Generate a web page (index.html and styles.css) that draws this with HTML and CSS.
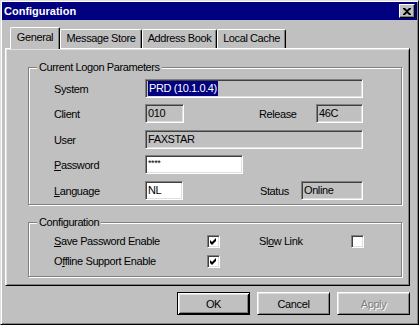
FILE: index.html
```html
<!DOCTYPE html>
<html lang="en">

<head>
    <meta charset="UTF-8">
    <title>Configuration</title>
    <link rel="stylesheet" href="styles.css">
</head>

<body>
    <div class="window">
        <div class="title-bar">
            <span class="title">Configuration</span>
            <button class="close-btn" aria-label="Close">
                <svg width="8" height="7" viewBox="0 0 8 7">
                    <path d="M0 0h2l2 2 2-2h2v1L5 3.5 8 6v1H6L4 5 2 7H0V6l3-2.5L0 1z" fill="#000" />
                </svg>
            </button>
        </div>

        <div class="content">
            <div class="tabs">
                <div class="tab tab-active tab-general">General</div>
                <div class="tab tab-store">Message Store</div>
                <div class="tab tab-address">Address Book</div>
                <div class="tab tab-cache">Local Cache</div>
            </div>

            <div class="panel">
                <fieldset class="group group-logon">
                    <legend>Current Logon Parameters</legend>
                    <div class="rows">
                        <div class="row">
                            <span class="label">System</span>
                            <div class="field field-wide"><span class="selected">PRD (10.1.0.4)</span></div>
                        </div>
                        <div class="row row-b">
                            <span class="label">Client</span>
                            <div class="field field-client">010</div>
                            <span class="label label-release">Release</span>
                            <div class="field field-release">46C</div>
                        </div>
                        <div class="row row-c">
                            <span class="label">User</span>
                            <div class="field field-wide">FAXSTAR</div>
                        </div>
                        <div class="row row-b">
                            <span class="label"><u>P</u>assword</span>
                            <div class="field field-edit field-password"><span class="stars">****</span></div>
                        </div>
                        <div class="row row-c">
                            <span class="label"><u>L</u>anguage</span>
                            <div class="field field-edit field-lang">NL</div>
                            <span class="label label-status">Status</span>
                            <div class="field field-status">Online</div>
                        </div>
                    </div>
                </fieldset>

                <fieldset class="group group-config">
                    <legend>Configuration</legend>
                    <div class="rows">
                        <div class="check-row">
                            <span class="check-label"><u>S</u>ave Password Enable</span>
                            <span class="checkbox">
                                <svg width="7" height="7" viewBox="0 0 7 7">
                                    <path d="M0 2l2 2 4-4v3L2 7 0 5z" fill="#000" />
                                </svg>
                            </span>
                            <span class="check-label label-slow">Sl<u>o</u>w Link</span>
                            <span class="checkbox"></span>
                        </div>
                        <div class="check-row check-row-2">
                            <span class="check-label">O<u>f</u>fline Support Enable</span>
                            <span class="checkbox">
                                <svg width="7" height="7" viewBox="0 0 7 7">
                                    <path d="M0 2l2 2 4-4v3L2 7 0 5z" fill="#000" />
                                </svg>
                            </span>
                        </div>
                    </div>
                </fieldset>
            </div>

            <div class="buttons">
                <button class="btn btn-default">OK</button>
                <button class="btn">Cancel</button>
                <button class="btn btn-disabled">Apply</button>
            </div>
        </div>
    </div>
</body>

</html>
```

FILE: styles.css
```css
* {
    box-sizing: border-box;
}

body {
    margin: 0;
    background: #c0c0c0;
    font-family: "Liberation Sans", Arial, sans-serif;
    font-size: 11px;
    letter-spacing: -0.4px;
    color: #000;
}

.window {
    width: 419px;
    height: 325px;
    padding: 1px;
    border: 1px solid;
    border-color: #dfdfdf #000 #000 #dfdfdf;
    box-shadow: inset 1px 1px #fff, inset -1px -1px #808080;
    background: #c0c0c0;
}

.title-bar {
    height: 18px;
    background: #000080;
    color: #fff;
    display: flex;
    align-items: center;
    justify-content: space-between;
    padding: 0 2px 0 2px;
}

.title {
    font-weight: bold;
    letter-spacing: 0;
}

.close-btn {
    width: 16px;
    height: 14px;
    padding: 0;
    margin: 0;
    background: #c0c0c0;
    border: 1px solid;
    border-color: #fff #000 #000 #fff;
    box-shadow: inset -1px -1px #808080;
    display: flex;
    align-items: center;
    justify-content: center;
}

/* dialog body */
.content {
    padding: 7px 0 0 3px;
}

.tabs {
    display: flex;
    align-items: flex-end;
    height: 21px;
    margin-left: 5px;
    position: relative;
    z-index: 1;
}

.tab {
    height: 19px;
    line-height: 17px;
    text-align: center;
    border: 1px solid;
    border-bottom: none;
    border-color: #fff #000 #fff #fff;
    border-radius: 2px 2px 0 0;
    box-shadow: inset -1px 0 #808080;
    background: #c0c0c0;
}

.tab-active {
    height: 22px;
    margin-bottom: -1px;
    line-height: 18px;
    position: relative;
    z-index: 2;
}

.tab-general {
    width: 50px;
}

.tab-store {
    width: 82px;
}

.tab-address {
    width: 75px;
}

.tab-cache {
    width: 69px;
}

.panel {
    width: 405px;
    height: 238px;
    padding: 11px 7px 0 22px;
    border: 1px solid;
    border-color: #fff #000 #000 #fff;
    box-shadow: inset 1px 1px #dfdfdf, inset -1px -1px #808080;
}

.group {
    margin: 0;
    padding: 5px 0 4px 8px;
    border: 1px solid #808080;
    box-shadow: 1px 1px #fff, inset 1px 1px #fff;
}

.group legend {
    padding: 0 2px;
    line-height: 14px;
    background: #c0c0c0;
}

.group-config {
    margin-top: 10px;
    padding: 6px 0 8px 8px;
}

.rows {
    margin-left: 17px;
}

.row {
    display: flex;
    align-items: center;
    height: 19px;
}

.row-b {
    margin-top: 6px;
}

.row-c {
    margin-top: 7px;
}

.label {
    width: 91px;
}

.label-release {
    width: 57px;
    margin-left: 75px;
}

.label-status {
    width: 41px;
    margin-left: 77px;
}

.field {
    height: 19px;
    line-height: 17px;
    padding-left: 2px;
    border: 1px solid;
    border-color: #808080 #fff #fff #808080;
    box-shadow: inset 1px 1px #404040, inset -1px -1px #dfdfdf;
    white-space: nowrap;
    overflow: hidden;
}

.field-wide {
    width: 218px;
}

.field-client {
    width: 39px;
}

.field-release {
    width: 47px;
}

.field-password {
    width: 98px;
}

.field-lang {
    width: 38px;
}

.field-status {
    width: 62px;
}

.field-edit {
    background: #fff;
}

.selected {
    display: inline-block;
    background: #000080;
    color: #fff;
    line-height: 15px;
    padding: 0 1px;
    margin-top: 1px;
    vertical-align: top;
}

.stars {
    font-size: 9px;
    vertical-align: top;
    line-height: 15px;
}

.check-row {
    display: flex;
    align-items: center;
    height: 13px;
}

.check-row-2 {
    margin-top: 7px;
}

.check-label {
    width: 153px;
    line-height: 13px;
}

.label-slow {
    width: 92px;
    margin-left: 39px;
}

.checkbox {
    width: 13px;
    height: 13px;
    background: #fff;
    border: 1px solid;
    border-color: #808080 #fff #fff #808080;
    box-shadow: inset 1px 1px #404040, inset -1px -1px #dfdfdf;
    display: flex;
    align-items: center;
    justify-content: center;
}

.buttons {
    display: flex;
    justify-content: flex-end;
    gap: 7px;
    width: 405px;
    margin-top: 6px;
}

.btn {
    width: 73px;
    height: 23px;
    padding: 0;
    font-family: inherit;
    font-size: 11px;
    letter-spacing: -0.4px;
    color: #000;
    background: #c0c0c0;
    border: 1px solid;
    border-color: #fff #000 #000 #fff;
    box-shadow: inset 1px 1px #dfdfdf, inset -1px -1px #808080;
}

.btn-default {
    border: 1px solid #000;
    box-shadow: inset 1px 1px #fff, inset -1px -1px #000, inset 2px 2px #dfdfdf, inset -2px -2px #808080;
}

.btn-disabled {
    color: #808080;
    text-shadow: 1px 1px #fff;
}
```
